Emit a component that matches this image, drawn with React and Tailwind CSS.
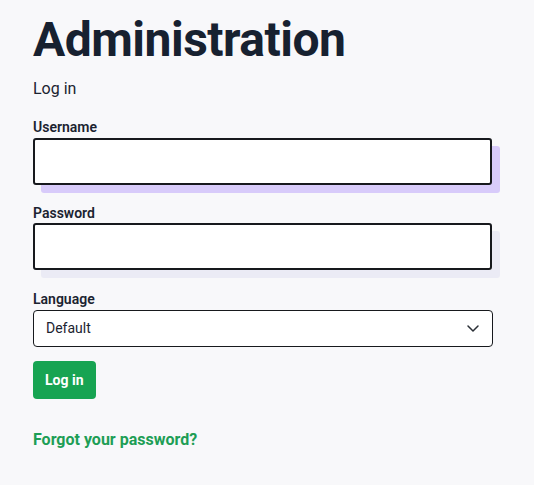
export default function App() {
  return (
    <div className="min-h-[485px] w-[534px] bg-[#f8f8fa] text-[#1b2330]" style={{ fontFamily: 'Roboto, "Noto Sans", sans-serif' }}>
      <div className="pl-[33px] pr-[42px] pt-[12px]">
        <h1 className="text-[48px] font-bold leading-[56px] tracking-[-0.5px] text-[#172130]">Administration</h1>
        <p className="mt-[10px] text-[16px] leading-[22px] text-[#1b2330]">Log in</p>
        <form className="mt-[17px] flex flex-col">
          <label className="text-[14px] font-semibold leading-[20px]">Username</label>
          <div className="relative mt-[1px] h-[47px] w-[459px]">
            <div className="absolute left-[8px] top-[8px] h-[47px] w-[459px] rounded-[3px] bg-[#d8cbfa]" />
            <input type="text" className="absolute inset-0 rounded-[3px] border-2 border-[#17191d] bg-white outline-none" />
          </div>
          <label className="mt-[18px] text-[14px] font-semibold leading-[20px]">Password</label>
          <div className="relative mt-[0px] h-[47px] w-[459px]">
            <div className="absolute left-[8px] top-[8px] h-[47px] w-[459px] rounded-[3px] bg-[#ebebf5]" />
            <input type="password" className="absolute inset-0 rounded-[3px] border-2 border-[#17191d] bg-white outline-none" />
          </div>
          <label className="mt-[19px] text-[14px] font-semibold leading-[20px]">Language</label>
          <div className="relative mt-[1px] flex h-[37px] w-[460px] items-center rounded-[4px] border border-[#17191d] bg-white pl-[12px]">
            <span className="text-[14px] text-[#1b2330]">Default</span>
            <svg className="absolute right-[12px] top-[12px]" width="14" height="10" viewBox="0 0 14 10" fill="none">
              <path d="M2 3l5 5 5-5" stroke="#2a2f36" strokeWidth="1.5" strokeLinecap="round" strokeLinejoin="round" />
            </svg>
          </div>
          <div className="mt-[14px]">
            <button type="button" className="h-[38px] rounded-[4px] bg-[#17a452] px-[12px] text-[14px] font-bold text-white">Log in</button>
          </div>
          <a className="mt-[31px] text-[16px] font-bold leading-[20px] text-[#1d9e55]">Forgot your password?</a>
        </form>
      </div>
    </div>
  );
}
